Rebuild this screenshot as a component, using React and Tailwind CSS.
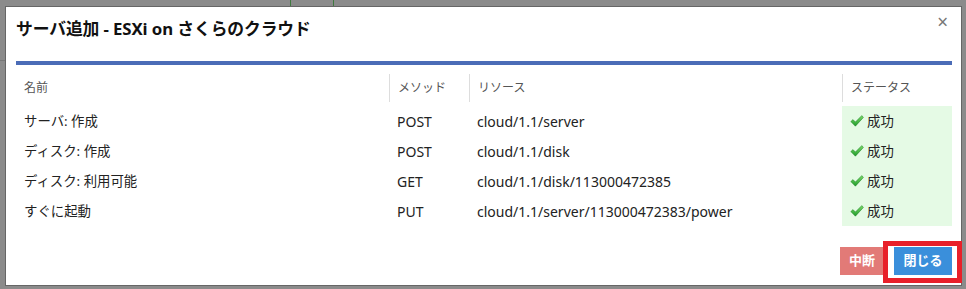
import React from "react";

const rows = [
  { name: "サーバ: 作成", method: "POST", res: "cloud/1.1/server" },
  { name: "ディスク: 作成", method: "POST", res: "cloud/1.1/disk" },
  { name: "ディスク: 利用可能", method: "GET", res: "cloud/1.1/disk/113000472385" },
  { name: "すぐに起動", method: "PUT", res: "cloud/1.1/server/113000472383/power" },
];

function Check() {
  return (
    <svg width="14" height="12" viewBox="0 0 14 12">
      <defs>
        <linearGradient id="ck" x1="0" y1="0" x2="0" y2="1">
          <stop offset="0" stopColor="#7ddc6a" />
          <stop offset="1" stopColor="#1f9a2a" />
        </linearGradient>
      </defs>
      <path d="M0.8 6.6 L3 4.6 L5.4 7 L11.8 0.6 L13.4 2.4 L5.4 11.2 Z" fill="url(#ck)" stroke="#1a7f25" strokeWidth="0.5" strokeLinejoin="round" />
    </svg>
  );
}

export default function App() {
  return (
    <div className="relative w-[966px] h-[289px] bg-[#8b8b8b] overflow-hidden" style={{ fontFamily: '"Noto Sans", "Noto Sans CJK JP", sans-serif' }}>
      {/* page behind the overlay */}
      <div className="absolute left-[290px] top-0 w-px h-[6px] bg-[#3f7a3f]" />
      <div className="absolute left-[333px] top-0 w-px h-[6px] bg-[#3f7a3f]" />
      <div className="absolute left-0 top-[60px] w-[5px] h-px bg-[#777]" />

      <div className="absolute left-[5px] top-[6px] w-[957px] h-[280px] bg-white border border-[#666] flex flex-col pl-[10px] pr-[9px]">
        <div className="relative h-[54px] flex items-center">
          <h1 className="text-[16.8px] font-bold text-[#111] mt-[-10px] tracking-[-0.1px]">サーバ追加 - ESXi on さくらのクラウド</h1>
          <span className="absolute right-[4px] top-[6px] text-[#777] text-[19px] leading-none">×</span>
        </div>
        <div className="h-[4px] bg-[#4b6cb7]" />

        <table className="w-[936px] table-fixed border-collapse mt-[9px]">
          <colgroup>
            <col className="w-[373px]" />
            <col className="w-[80px]" />
            <col className="w-[373px]" />
            <col className="w-[110px]" />
          </colgroup>
          <thead>
            <tr className="h-[32px] align-top">
              {["名前", "メソッド", "リソース", "ステータス"].map((h, i) => (
                <th key={h} className="p-0 text-left font-normal">
                  <div className={`h-[28px] flex items-center pl-[8px] text-[12px] text-[#555] ${i > 0 ? "border-l border-[#ddd]" : ""}`}>{h}</div>
                </th>
              ))}
            </tr>
          </thead>
          <tbody>
            {rows.map((r) => (
              <tr key={r.name} className="h-[30px] text-[13.4px] text-[#222]">
                <td className="pl-[8px]">{r.name}</td>
                <td className="pl-[8px] text-[14px]">{r.method}</td>
                <td className="pl-[8px] text-[14px]">{r.res}</td>
                <td className="pl-[8px] bg-[#e5fae5]">
                  <div className="flex items-center gap-[3px]">
                    <Check />
                    <span>成功</span>
                  </div>
                </td>
              </tr>
            ))}
          </tbody>
        </table>

        <div className="flex justify-end gap-[10px] mt-[21px]">
          <button className="h-[28px] w-[44px] bg-[#e27a77] text-white text-[13px] font-bold">中断</button>
          <button className="h-[28px] w-[58px] bg-[#3a8fdb] text-white text-[13px] font-bold">閉じる</button>
        </div>
      </div>

      <div className="absolute left-[883px] top-[241px] w-[79px] h-[42px] border-[5px] border-[#e8202a]" />
    </div>
  );
}
